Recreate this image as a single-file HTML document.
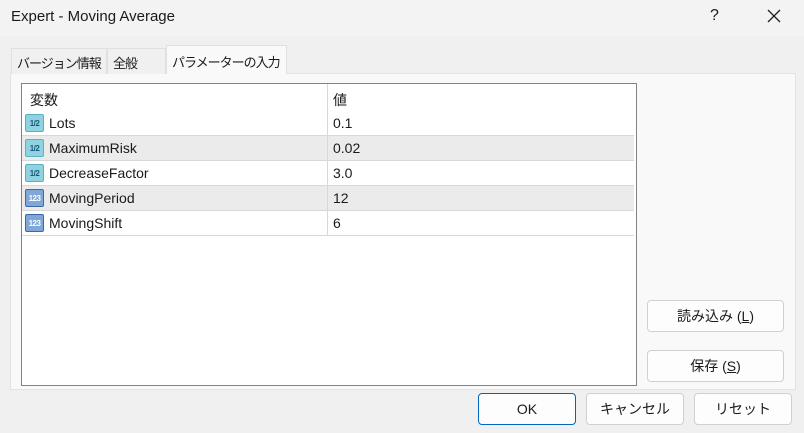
<!DOCTYPE html>
<html><head><meta charset="utf-8">
<style>
*{margin:0;padding:0;box-sizing:border-box}
body{width:804px;height:433px;background:#f0f0f0;font-family:"Segoe UI","Liberation Sans","Noto Sans CJK JP",sans-serif;font-size:14px;color:#1a1a1a;position:relative;overflow:hidden}
.title{position:absolute;left:0;top:0;width:804px;height:36px;background:#f3f3f3}
.title .t{position:absolute;left:11px;top:8px;font-size:15px}
.q{position:absolute;left:710px;top:7px;font-size:16px}
.x{position:absolute;left:766px;top:8px}
.tab{position:absolute;top:48px;height:26px;border:1px solid #e0e0e0;border-bottom:none;background:#f0f0f0;padding:4px 0 0 5px;font-size:13px;white-space:nowrap;overflow:hidden;letter-spacing:-1px}
.tab.sel{top:45px;height:29px;background:#f9f9f9;padding-top:6px}
.panel{position:absolute;left:10px;top:73px;width:786px;height:317px;background:#f9f9f9;border:1px solid #e3e3e3}
.list{position:absolute;left:21px;top:83px;width:616px;height:303px;background:#fff;border:1px solid #828282}
.row{position:absolute;left:0;width:612px;height:25px;border-bottom:1px solid #d8d8d8}
.row.g{background:#ebebeb}
.row span{position:absolute;top:4px}
.c1{left:27px}.c2{left:311px}
.div{position:absolute;left:305px;top:0;width:1px;height:151px;background:#d8d8d8}
.ic{position:absolute;left:3px;top:3px;width:19px;height:18px;border-radius:2px;font-size:8px;font-weight:bold;text-align:center;line-height:17px;font-family:"Liberation Sans",sans-serif;letter-spacing:-0.5px}
.ic.h{background:#8fd3e0;color:#1c5a78;border:1px solid #5ab0c8}
.ic.n{background:#7fa8d8;color:#fff;border:1px solid #3c6aa8}
.btn{position:absolute;height:32px;background:#fdfdfd;border:1px solid #d0d0d0;border-radius:4px;text-align:center;line-height:30px;font-size:14px}
.btn.ok{border:1px solid #0067c0}
</style></head><body>
<div class="title"><span class="t">Expert - Moving Average</span><span class="q">?</span>
<svg class="x" width="16" height="16" viewBox="0 0 16 16"><path d="M2 2L14 14M14 2L2 14" stroke="#222" stroke-width="1.3"/></svg></div>
<div class="panel"></div>
<div class="tab" style="left:11px;width:96px">バージョン情報</div>
<div class="tab" style="left:107px;width:59px">全般</div>
<div class="tab sel" style="left:166px;width:121px">パラメーターの入力</div>
<div class="list">
<div class="row" style="top:0;height:27px;border-bottom:none"><span style="left:8px;top:6px">変数</span><span style="left:311px;top:6px">値</span></div>
<div class="row" style="top:27px"><div class="ic h">1/2</div><span class="c1">Lots</span><span class="c2">0.1</span></div>
<div class="row g" style="top:52px"><div class="ic h">1/2</div><span class="c1">MaximumRisk</span><span class="c2">0.02</span></div>
<div class="row" style="top:77px"><div class="ic h">1/2</div><span class="c1">DecreaseFactor</span><span class="c2">3.0</span></div>
<div class="row g" style="top:102px"><div class="ic n">123</div><span class="c1">MovingPeriod</span><span class="c2">12</span></div>
<div class="row" style="top:127px"><div class="ic n">123</div><span class="c1">MovingShift</span><span class="c2">6</span></div>
<div class="div"></div>
</div>
<div class="btn" style="left:647px;top:300px;width:137px">読み込み (<u>L</u>)</div>
<div class="btn" style="left:647px;top:350px;width:137px">保存 (<u>S</u>)</div>
<div class="btn ok" style="left:478px;top:393px;width:98px">OK</div>
<div class="btn" style="left:586px;top:393px;width:98px">キャンセル</div>
<div class="btn" style="left:694px;top:393px;width:98px">リセット</div>
</body></html>
